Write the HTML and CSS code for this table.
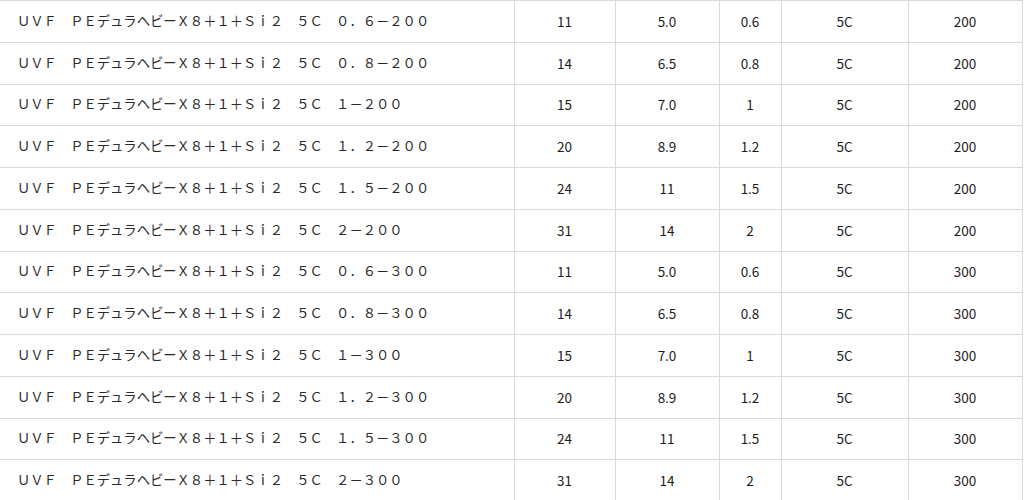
FILE: index.html
```html
<!DOCTYPE html>
<html lang="ja">
<head>
<meta charset="utf-8">
<link rel="stylesheet" href="styles.css">
</head>
<body>
<table class="spec">
  <colgroup>
    <col class="c-name"><col class="c2"><col class="c3"><col class="c4"><col class="c5"><col class="c6">
  </colgroup>
  <tbody>
    <tr><td class="name">ＵＶＦ　ＰＥデュラヘビーＸ８＋１＋Ｓｉ２　５Ｃ　０．６－２００</td><td>11</td><td>5.0</td><td>0.6</td><td>5C</td><td>200</td></tr>
    <tr><td class="name">ＵＶＦ　ＰＥデュラヘビーＸ８＋１＋Ｓｉ２　５Ｃ　０．８－２００</td><td>14</td><td>6.5</td><td>0.8</td><td>5C</td><td>200</td></tr>
    <tr><td class="name">ＵＶＦ　ＰＥデュラヘビーＸ８＋１＋Ｓｉ２　５Ｃ　１－２００</td><td>15</td><td>7.0</td><td>1</td><td>5C</td><td>200</td></tr>
    <tr><td class="name">ＵＶＦ　ＰＥデュラヘビーＸ８＋１＋Ｓｉ２　５Ｃ　１．２－２００</td><td>20</td><td>8.9</td><td>1.2</td><td>5C</td><td>200</td></tr>
    <tr><td class="name">ＵＶＦ　ＰＥデュラヘビーＸ８＋１＋Ｓｉ２　５Ｃ　１．５－２００</td><td>24</td><td>11</td><td>1.5</td><td>5C</td><td>200</td></tr>
    <tr><td class="name">ＵＶＦ　ＰＥデュラヘビーＸ８＋１＋Ｓｉ２　５Ｃ　２－２００</td><td>31</td><td>14</td><td>2</td><td>5C</td><td>200</td></tr>
    <tr><td class="name">ＵＶＦ　ＰＥデュラヘビーＸ８＋１＋Ｓｉ２　５Ｃ　０．６－３００</td><td>11</td><td>5.0</td><td>0.6</td><td>5C</td><td>300</td></tr>
    <tr><td class="name">ＵＶＦ　ＰＥデュラヘビーＸ８＋１＋Ｓｉ２　５Ｃ　０．８－３００</td><td>14</td><td>6.5</td><td>0.8</td><td>5C</td><td>300</td></tr>
    <tr><td class="name">ＵＶＦ　ＰＥデュラヘビーＸ８＋１＋Ｓｉ２　５Ｃ　１－３００</td><td>15</td><td>7.0</td><td>1</td><td>5C</td><td>300</td></tr>
    <tr><td class="name">ＵＶＦ　ＰＥデュラヘビーＸ８＋１＋Ｓｉ２　５Ｃ　１．２－３００</td><td>20</td><td>8.9</td><td>1.2</td><td>5C</td><td>300</td></tr>
    <tr><td class="name">ＵＶＦ　ＰＥデュラヘビーＸ８＋１＋Ｓｉ２　５Ｃ　１．５－３００</td><td>24</td><td>11</td><td>1.5</td><td>5C</td><td>300</td></tr>
    <tr><td class="name">ＵＶＦ　ＰＥデュラヘビーＸ８＋１＋Ｓｉ２　５Ｃ　２－３００</td><td>31</td><td>14</td><td>2</td><td>5C</td><td>300</td></tr>
  </tbody>
</table>
</body>
</html>
```

FILE: styles.css
```css
html, body {
  margin: 0;
  padding: 0;
  background: #ffffff;
}

body {
  font-family: "Noto Sans CJK JP", "Noto Sans", sans-serif;
  color: #1c1c1c;
  overflow: hidden;
}

.spec {
  border-collapse: collapse;
  table-layout: fixed;
  width: 1022px;
}

.c-name { width: 514px; }
.c2 { width: 101px; }
.c3 { width: 104px; }
.c4 { width: 62px; }
.c5 { width: 127px; }
.c6 { width: 114px; }

.spec td {
  border: 1px solid #dadada;
  height: 39.75px;
  padding: 0 0 1px 0;
  text-align: center;
  vertical-align: middle;
  font-size: 13.5px;
  line-height: 18px;
}

.spec td.name {
  border-left: none;
  text-align: left;
  padding-left: 17px;
  font-size: 13.3px;
  white-space: nowrap;
  color: #2a2a2a;
}
```
